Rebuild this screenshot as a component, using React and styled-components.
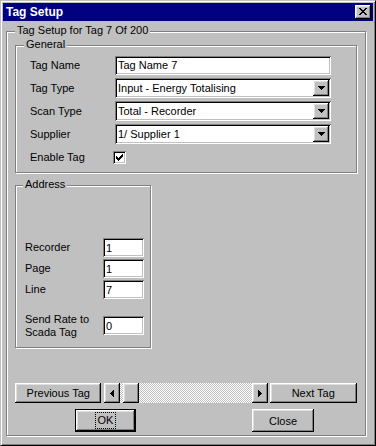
import React from 'react';
import styled, { createGlobalStyle, css } from 'styled-components';

const Global = createGlobalStyle`
  html, body { margin: 0; padding: 0; background: #c0c0c0; }
  body { font-family: "Liberation Sans", Arial, sans-serif; font-size: 11px; color: #000; }
  * { box-sizing: border-box; }
`;

const raised = css`
  background: #c0c0c0;
  box-shadow: inset -1px -1px #000, inset 1px 1px #fff, inset -2px -2px #808080, inset 2px 2px #dfdfdf;
`;

const sunken = css`
  background: #fff;
  box-shadow: inset 1px 1px #808080, inset -1px -1px #fff, inset 2px 2px #000, inset -2px -2px #c0c0c0;
`;

const Window = styled.div`
  width: 376px;
  height: 446px;
  background: #c0c0c0;
  border: 1px solid;
  border-color: #c0c0c0 #000 #000 #c0c0c0;
  box-shadow: inset 1px 1px #fff, inset -1px -1px #808080;
  padding: 2px;
  display: flex;
  flex-direction: column;
`;

const TitleBar = styled.div`
  height: 18px;
  background: #000080;
  color: #fff;
  font-weight: bold;
  font-size: 12px;
  display: flex;
  align-items: center;
  justify-content: space-between;
  padding: 0 2px 0 3px;
`;

const CloseBox = styled.div`
  ${raised};
  width: 16px;
  height: 14px;
  display: flex;
  align-items: center;
  justify-content: center;
  padding-bottom: 1px;
`;

const Group = styled.div`
  position: relative;
  border: 1px solid #808080;
  box-shadow: inset 1px 1px #fff, 1px 1px #fff;
`;

const Legend = styled.span`
  position: absolute;
  top: -8px;
  left: ${p => p.$left}px;
  line-height: 13px;
  padding: 0 2px;
  background: #c0c0c0;
  white-space: nowrap;
`;

const OuterGroup = styled(Group)`
  flex: 1;
  margin: 10px 7px 7px 3px;
  padding: 13px 8px 3px 8px;
  display: flex;
  flex-direction: column;
`;

const GeneralGroup = styled(Group)`
  height: 128px;
  padding: 9px 0 0 14px;
  display: grid;
  grid-template-columns: 85px 216px;
  grid-auto-rows: 20px;
  row-gap: 3px;
  align-items: center;
`;

const AddressGroup = styled(Group)`
  width: 136px;
  height: 163px;
  margin-top: 12px;
  padding: 52px 0 0 9px;
  display: grid;
  grid-template-columns: 78px 41px;
  grid-template-rows: 19px 19px 19px 40px;
  row-gap: 2px;
  align-items: center;
`;

const Label = styled.div`
  line-height: 13px;
  white-space: nowrap;
  ${p => p.$offset && css`align-self: start; margin-top: ${p.$offset}px;`}
`;

const TextField = styled.div`
  ${sunken};
  height: ${p => p.$h || 20}px;
  padding: 0 3px;
  display: flex;
  align-items: center;
  white-space: nowrap;
  overflow: hidden;
  ${p => p.$offset && css`align-self: start; margin-top: ${p.$offset}px;`}
`;

const Combo = styled.div`
  ${sunken};
  height: 20px;
  padding: 2px 2px 2px 3px;
  display: flex;
  align-items: center;
`;

const ComboText = styled.span`
  flex: 1;
  white-space: nowrap;
  overflow: hidden;
`;

const DropButton = styled.div`
  ${raised};
  width: 16px;
  height: 16px;
  display: flex;
  align-items: center;
  justify-content: center;
`;

const CheckBox = styled.div`
  ${sunken};
  width: 13px;
  height: 13px;
  margin-left: -2px;
  display: flex;
  align-items: center;
  justify-content: center;
`;

const NavRow = styled.div`
  margin-top: auto;
  height: 20px;
  display: flex;
  align-items: stretch;
`;

const Button = styled.div`
  ${raised};
  width: ${p => p.$w}px;
  height: ${p => p.$h || 20}px;
  display: flex;
  align-items: center;
  justify-content: center;
  ${p => p.$default && css`
    border: 1px solid #000;
  `}
`;

const ScrollBar = styled.div`
  width: 164px;
  margin: 0 2px 0 3px;
  display: flex;
`;

const ScrollArrow = styled.div`
  ${raised};
  width: 16px;
  display: flex;
  align-items: center;
  justify-content: center;
`;

const Track = styled.div`
  flex: 1;
  display: flex;
  background: repeating-conic-gradient(#c0c0c0 0 25%, #fff 0 50%) 0 0 / 2px 2px;
`;

const Thumb = styled.div`
  ${raised};
  width: 16px;
  margin-left: 3px;
`;

const ActionRow = styled.div`
  margin-top: 6px;
  height: 23px;
  display: flex;
  padding-left: 60px;
  gap: 116px;
`;

const Focus = styled.span`
  outline: 1px dotted #000;
  padding: 1px 2px;
  line-height: 13px;
`;

const DownTri = () => (
  <svg width="7" height="4" viewBox="0 0 7 4" shapeRendering="crispEdges">
    <path d="M0 0h7v1h-1v1h-1v1h-1v1h-1v-1h-1v-1h-1v-1h-1z" fill="#000" />
  </svg>
);

const SideTri = ({ dir }) => (
  <svg width="4" height="7" viewBox="0 0 4 7" shapeRendering="crispEdges">
    {dir === 'left' ? (
      <path d="M3 0h1v7h-1v-1h-1v-1h-1v-1h-1v-1h1v-1h1v-1h1z" fill="#000" />
    ) : (
      <path d="M0 0h1v1h1v1h1v1h1v1h-1v1h-1v1h-1v1h-1z" fill="#000" />
    )}
  </svg>
);

const CheckMark = () => {
  const cols = [2, 3, 4, 3, 2, 1, 0];
  return (
    <svg width="7" height="7" viewBox="0 0 7 7" shapeRendering="crispEdges">
      {cols.map((y, x) => (
        <rect key={x} x={x} y={y} width="1" height="3" fill="#000" />
      ))}
    </svg>
  );
};

const CloseX = () => (
  <svg width="8" height="7" viewBox="0 0 8 7" shapeRendering="crispEdges">
    <path d="M0 0h2v1h1v1h2v-1h1v-1h2v1h-1v1h-1v1h-1v1h1v1h1v1h1v1h-2v-1h-1v-1h-2v1h-1v1h-2v-1h1v-1h1v-1h1v-1h-1v-1h-1v-1h-1z" fill="#000" />
  </svg>
);

const Dropdown = ({ value }) => (
  <Combo>
    <ComboText>{value}</ComboText>
    <DropButton><DownTri /></DropButton>
  </Combo>
);

export default function App() {
  return (
    <>
      <Global />
      <Window>
        <TitleBar>
          <span>Tag Setup</span>
          <CloseBox><CloseX /></CloseBox>
        </TitleBar>
        <OuterGroup>
          <Legend $left={8}>Tag Setup for Tag 7 Of 200</Legend>
          <GeneralGroup>
            <Legend $left={8}>General</Legend>
            <Label>Tag Name</Label>
            <TextField $h={19}>Tag Name 7</TextField>
            <Label>Tag Type</Label>
            <Dropdown value="Input - Energy Totalising" />
            <Label>Scan Type</Label>
            <Dropdown value="Total - Recorder" />
            <Label>Supplier</Label>
            <Dropdown value="1/ Supplier 1" />
            <Label>Enable Tag</Label>
            <CheckBox><CheckMark /></CheckBox>
          </GeneralGroup>
          <AddressGroup>
            <Legend $left={7}>Address</Legend>
            <Label>Recorder</Label>
            <TextField $h={19}>1</TextField>
            <Label>Page</Label>
            <TextField $h={19}>1</TextField>
            <Label>Line</Label>
            <TextField $h={19}>7</TextField>
            <Label $offset={12}>Send Rate to<br />Scada Tag</Label>
            <TextField $h={19} $offset={15}>0</TextField>
          </AddressGroup>
          <NavRow>
            <Button $w={87}>Previous Tag</Button>
            <ScrollBar>
              <ScrollArrow><SideTri dir="left" /></ScrollArrow>
              <Track>
                <Thumb />
              </Track>
              <ScrollArrow><SideTri dir="right" /></ScrollArrow>
            </ScrollBar>
            <Button $w={88}>Next Tag</Button>
          </NavRow>
          <ActionRow>
            <Button $w={61} $h={23} $default><Focus>OK</Focus></Button>
            <Button $w={62} $h={23}>Close</Button>
          </ActionRow>
        </OuterGroup>
      </Window>
    </>
  );
}
